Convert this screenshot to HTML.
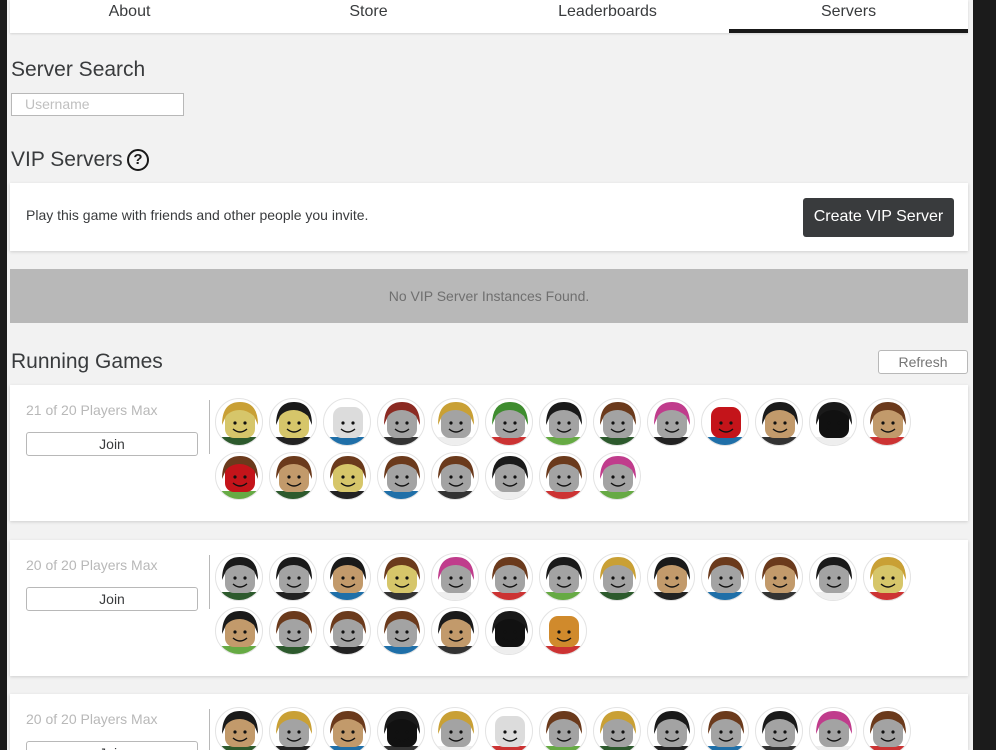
<!DOCTYPE html>
<html style="width:996px;height:750px;overflow:hidden"><head><meta charset="utf-8"><style>
*{box-sizing:border-box;margin:0;padding:0}
body{width:996px;height:750px;overflow:hidden;background:#1b1b1b;font-family:"Liberation Sans",sans-serif;position:relative}
#main{position:absolute;left:7px;top:0;width:966px;height:750px;background:#f2f2f2;overflow:hidden}
.abs{position:absolute}
.tabs{left:3px;top:0;width:958px;height:33px;background:#fff;box-shadow:0 1px 2px rgba(0,0,0,.12)}
.tab{position:absolute;top:3px;font-size:16px;color:#393b3d;text-align:center;width:239px}
.h{font-size:21px;color:#393b3d;font-weight:300}
.card{background:#fff;box-shadow:0 1px 3px rgba(0,0,0,.15);left:3px;width:958px;overflow:hidden}
.av{position:absolute;width:48px;height:48px;border-radius:50%;background:#fff;border:1px solid #e3e3e3;overflow:hidden}
.btn{border:1px solid #b8b8b8;border-radius:3px;background:#fff;color:#393b3d;font-size:14px;text-align:center}
</style></head><body>
<div id="main">
<div class="abs tabs">
<div class="tab" style="left:0">About</div>
<div class="tab" style="left:239px">Store</div>
<div class="tab" style="left:478px">Leaderboards</div>
<div class="tab" style="left:719px">Servers</div>
<div class="abs" style="left:719px;top:29px;width:239px;height:4px;background:#191919"></div>
</div>
<div class="abs h" style="left:4px;top:58px">Server Search</div>
<div class="abs" style="left:4px;top:93px;width:173px;height:23px;background:#fff;border:1px solid #b8b8b8;font-size:14px;color:#c0c0c0;padding:2px 0 0 13px">Username</div>
<div class="abs h" style="left:4px;top:148px">VIP Servers</div>
<div class="abs" style="left:120px;top:149px;width:22px;height:22px;border:2px solid #191919;border-radius:50%;font-size:15px;font-weight:bold;text-align:center;line-height:18px;color:#191919">?</div>
<div class="abs card" style="top:183px;height:68px">
<div class="abs" style="left:16px;top:24px;font-size:14px;color:#393b3d">Play this game with friends and other people you invite.</div>
<div class="abs" style="left:793px;top:15px;width:151px;height:39px;background:#393b3d;border-radius:3px;color:#fff;font-size:16px;text-align:center;line-height:38px">Create VIP Server</div>
</div>
<div class="abs" style="left:3px;top:269px;width:958px;height:54px;background:#b8b8b8;color:#6f6f6f;font-size:14px;text-align:center;line-height:54px">No VIP Server Instances Found.</div>
<div class="abs h" style="left:4px;top:350px">Running Games</div>
<div class="abs btn" style="left:871px;top:350px;width:90px;height:24px;line-height:22px;color:#757575">Refresh</div>
<div id="servers"></div>
</div>
<script>
const skins={g:'#a3a3a3',y:'#d6c66a',t:'#c29a6b',r:'#c4141a',b:'#111',w:'#dcdcdc',o:'#d08a2c'};
const hairs={n:'#6b3a1c',k:'#1a1a1a',p:'#c03c8c',bl:'#c9a035',no:null,gr:'#3f8c2f',rd:'#8b2a22'};
const s1=[['y','bl'],['y','k'],['w','no'],['g','rd'],['g','bl'],['g','gr'],['g','k'],['g','n'],['g','p'],['r','no'],['t','k'],['b','k'],['t','n'],['r','n'],['t','n'],['y','n'],['g','n'],['g','n'],['g','k'],['g','n'],['g','p']];
const s2=[['g','k'],['g','k'],['t','k'],['y','n'],['g','p'],['g','n'],['g','k'],['g','bl'],['t','k'],['g','n'],['t','n'],['g','k'],['y','bl'],['t','k'],['g','n'],['g','n'],['g','n'],['t','k'],['b','k'],['o','no']];
const s3=[['t','k'],['g','bl'],['t','n'],['b','k'],['g','bl'],['w','no'],['g','n'],['g','bl'],['g','k'],['g','n'],['g','o'],['g','p'],['g','n']];
const torsos=['#2d5a2d','#222','#1f6fa8','#333','#eee','#c33','#6a4'];
function av(x,y,s,h,i){
 const sk=skins[s],hr=hairs[h]||hairs['k'];
 let html=`<div class="av" style="left:${x}px;top:${y}px"><svg width="48" height="48">
 <rect x="2" y="38" width="44" height="12" fill="${torsos[i%torsos.length]}"/>
 <rect x="9" y="8" width="30" height="31" rx="9" fill="${sk}"/>`;
 if(h!=='no') html+=`<path d="M6 26 Q6 3 24 3 Q42 3 42 26 L38 17 Q31 11 24 11 Q15 11 10 17 Z" fill="${hr}"/>`;
 html+=`<circle cx="19" cy="24" r="1.6" fill="#111"/><circle cx="29" cy="24" r="1.6" fill="#111"/><path d="M17 30 Q24 36 31 30" stroke="#111" stroke-width="1.4" fill="none"/></svg></div>`;
 return html;
}
function server(top,label,list,ht){
 let h=`<div class="abs card" style="top:${top}px;height:${ht}px">
 <div class="abs" style="left:16px;top:17px;font-size:14px;color:#b8b8b8">${label}</div>
 <div class="abs btn" style="left:16px;top:47px;width:172px;height:24px;line-height:22px">Join</div>
 <div class="abs" style="left:199px;top:15px;width:1px;height:54px;background:#b8b8b8"></div>`;
 list.forEach((a,i)=>{const c=i%13,r=Math.floor(i/13);h+=av(205+c*54,13+r*54,a[0],a[1],i);});
 return h+'</div>';
}
document.getElementById('servers').innerHTML=server(385,'21 of 20 Players Max',s1,136)+server(540,'20 of 20 Players Max',s2,136)+server(694,'20 of 20 Players Max',s3,56);
</script>
</body></html>
